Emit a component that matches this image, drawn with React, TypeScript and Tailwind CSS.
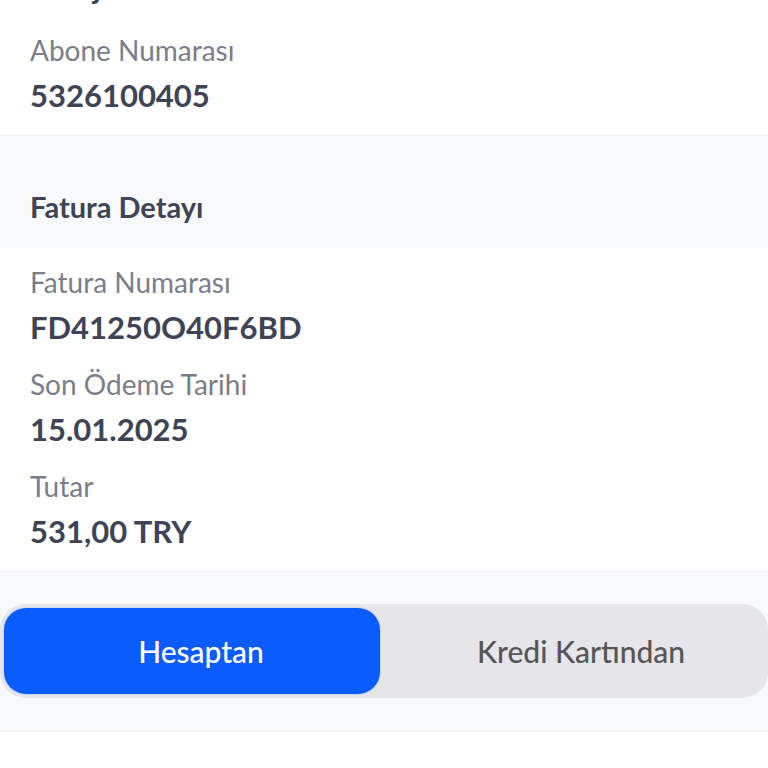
import React from "react";

const Field = ({ label, value }: { label: string; value: string }) => (
  <div className="flex flex-col">
    <div className="h-[40px] leading-[40px] text-[28px] text-[#7a7e89]">{label}</div>
    <div className="h-[50px] leading-[50px] text-[31px] font-bold text-[#3e4456]">{value}</div>
  </div>
);

export default function App() {
  return (
    <div
      className="w-[768px] h-[768px] overflow-hidden bg-white"
      style={{ fontFamily: "Lato, 'Noto Sans', sans-serif" }}
    >
      <div className="-mt-[38px] px-[30px] pb-[15px] flex flex-col gap-[18px] border-b border-[#eceef1]">
        <div className="h-[50px] leading-[50px] text-[31px] font-bold text-[#3e4456]">Enerjisa</div>
        <Field label="Abone Numarası" value="5326100405" />
      </div>
      <div className="bg-[#f8f9fb] px-[30px] pt-[51px] pb-[21px]">
        <div className="h-[40px] leading-[40px] text-[29px] font-bold text-[#3e4456]">Fatura Detayı</div>
      </div>
      <div className="px-[30px] pt-[14px] pb-[15px] flex flex-col gap-[12px] border-b border-[#eceef1]">
        <Field label="Fatura Numarası" value="FD41250O40F6BD" />
        <Field label="Son Ödeme Tarihi" value="15.01.2025" />
        <Field label="Tutar" value="531,00 TRY" />
      </div>
      <div className="bg-[#f8f9fb] pt-[32px] pb-[33px] border-b border-[#eceef1]">
        <div className="flex h-[94px] rounded-[26px] bg-[#e5e5ea] p-[4px]">
          <div className="w-[376px] flex items-center justify-center pl-[18px] rounded-[22px] bg-[#0a5cff] shadow-[0_0_0_1px_#c9d8f5] text-white text-[30px] font-medium">
            Hesaptan
          </div>
          <div className="flex-1 flex items-center justify-center pl-[18px] text-[#555558] text-[30px] font-medium">
            Kredi Kartından
          </div>
        </div>
      </div>
    </div>
  );
}
